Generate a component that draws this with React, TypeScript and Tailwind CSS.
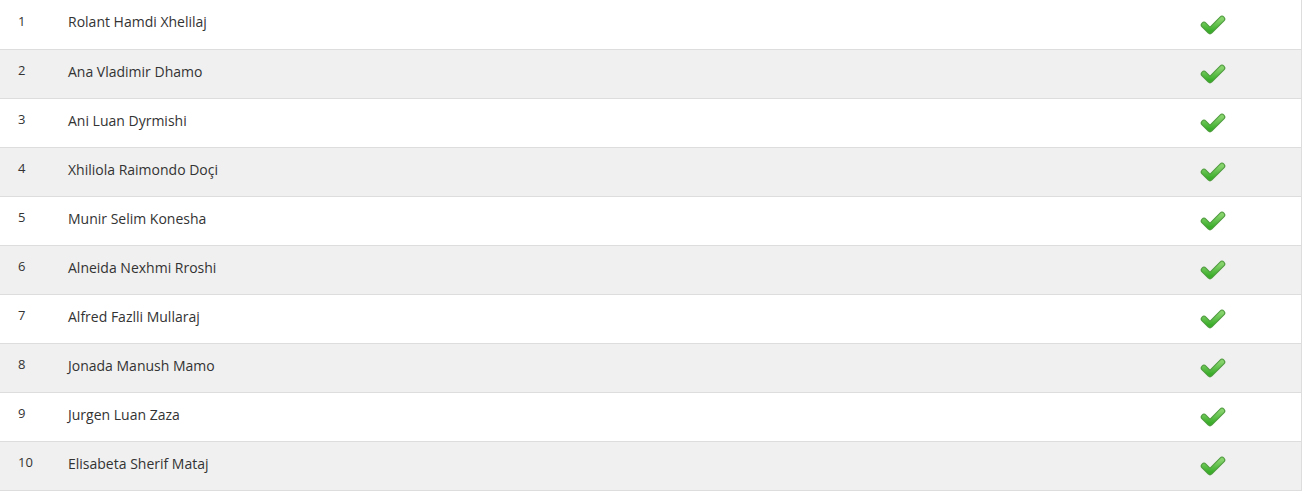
const rows = [
  "Rolant Hamdi Xhelilaj",
  "Ana Vladimir Dhamo",
  "Ani Luan Dyrmishi",
  "Xhiliola Raimondo Doçi",
  "Munir Selim Konesha",
  "Alneida Nexhmi Rroshi",
  "Alfred Fazlli Mullaraj",
  "Jonada Manush Mamo",
  "Jurgen Luan Zaza",
  "Elisabeta Sherif Mataj",
];

function Check() {
  return (
    <svg width="26" height="22" viewBox="0 0 26 22">
      <defs>
        <linearGradient id="g" x1="0" y1="0" x2="0" y2="1">
          <stop offset="0" stopColor="#86d36c" />
          <stop offset="1" stopColor="#3aad2a" />
        </linearGradient>
      </defs>
      <path
        d="M4 11 L10 17 L22 5"
        fill="none"
        stroke="#4f9a3f"
        strokeWidth="6.5"
        strokeLinecap="round"
        strokeLinejoin="round"
      />
      <path
        d="M4 11 L10 17 L22 5"
        fill="none"
        stroke="url(#g)"
        strokeWidth="4.5"
        strokeLinecap="round"
        strokeLinejoin="round"
      />
    </svg>
  );
}

export default function App() {
  return (
    <div className="bg-white" style={{ fontFamily: "'Open Sans', Lato, sans-serif" }}>
      <table className="w-[1302px] border-collapse border-r border-[#dddddd] text-[14px] text-[#333333]">
        <tbody>
          {rows.map((name, i) => (
            <tr
              key={i}
              className={`h-[49px] border-b border-[#dddddd] ${i % 2 === 1 ? "bg-[#f0f0f0]" : "bg-white"}`}
            >
              <td className="w-[68px] pl-[18px] pb-[5px] text-[13px] align-middle">{i + 1}</td>
              <td className="pb-[5px] align-middle">{name}</td>
              <td className="w-[102px] align-middle">
                <div className="pt-[1px]">
                  <Check />
                </div>
              </td>
            </tr>
          ))}
        </tbody>
      </table>
    </div>
  );
}
